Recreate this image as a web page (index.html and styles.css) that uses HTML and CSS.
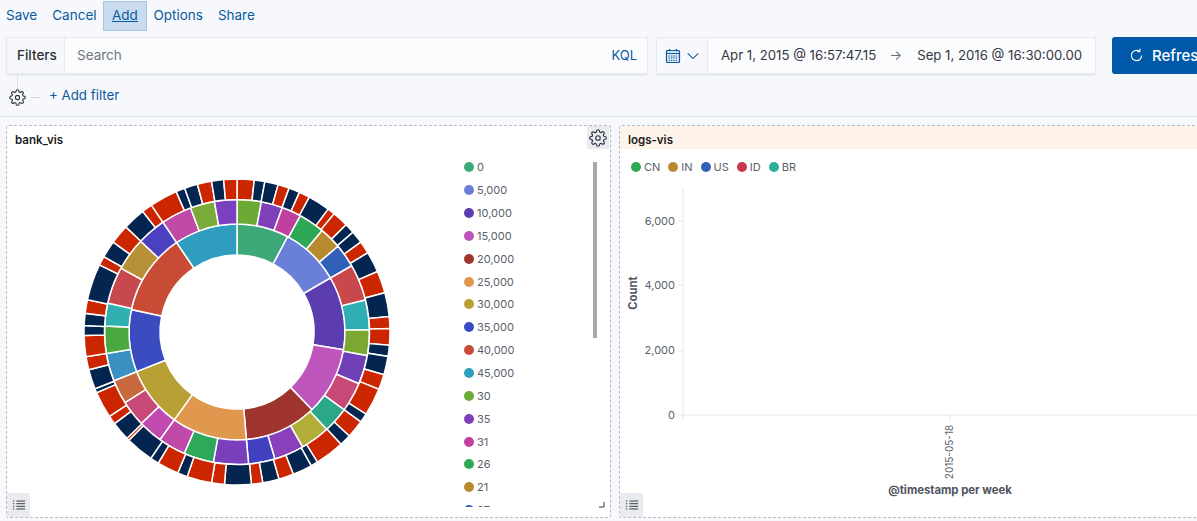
FILE: index.html
```html
<!DOCTYPE html>
<html lang="en">

<head>
  <meta charset="UTF-8">
  <title>Dashboard</title>
  <link rel="stylesheet" href="styles.css">
  <script src="donut.js" defer></script>
</head>

<body>
  <svg class="defs" width="0" height="0">
    <symbol id="gear" viewBox="0 0 24 24">
      <circle cx="12" cy="12" r="3"></circle>
      <path d="M19.4 15a1.65 1.65 0 0 0 .33 1.82l.06.06a2 2 0 0 1 0 2.83 2 2 0 0 1-2.83 0l-.06-.06a1.65 1.65 0 0 0-1.82-.33 1.65 1.65 0 0 0-1 1.51V21a2 2 0 0 1-2 2 2 2 0 0 1-2-2v-.09A1.65 1.65 0 0 0 9 19.4a1.65 1.65 0 0 0-1.82.33l-.06.06a2 2 0 0 1-2.83 0 2 2 0 0 1 0-2.83l.06-.06a1.65 1.65 0 0 0 .33-1.82 1.65 1.65 0 0 0-1.51-1H3a2 2 0 0 1-2-2 2 2 0 0 1 2-2h.09A1.65 1.65 0 0 0 4.6 9a1.65 1.65 0 0 0-.33-1.82l-.06-.06a2 2 0 0 1 0-2.83 2 2 0 0 1 2.83 0l.06.06a1.65 1.65 0 0 0 1.82.33H9a1.65 1.65 0 0 0 1-1.51V3a2 2 0 0 1 2-2 2 2 0 0 1 2 2v.09a1.65 1.65 0 0 0 1 1.51 1.65 1.65 0 0 0 1.82-.33l.06-.06a2 2 0 0 1 2.83 0 2 2 0 0 1 0 2.83l-.06.06a1.65 1.65 0 0 0-.33 1.82V9a1.65 1.65 0 0 0 1.51 1H21a2 2 0 0 1 2 2 2 2 0 0 1-2 2h-.09a1.65 1.65 0 0 0-1.51 1z"></path>
    </symbol>
    <symbol id="list" viewBox="0 0 16 16">
      <path d="M5 3.5h10M5 6.5h10M5 9.5h10M5 12.5h10"></path>
      <path class="dots" d="M1 3.5h1.6M1 6.5h1.6M1 9.5h1.6M1 12.5h1.6"></path>
    </symbol>
  </svg>

  <nav class="topnav">
    <a class="navlink" href="#">Save</a>
    <a class="navlink" href="#">Cancel</a>
    <a class="navlink active" href="#">Add</a>
    <a class="navlink" href="#">Options</a>
    <a class="navlink" href="#">Share</a>
  </nav>

  <div class="querybar">
    <div class="searchbox">
      <span class="prepend">Filters</span>
      <span class="search">Search</span>
      <a class="kql" href="#">KQL</a>
    </div>
    <div class="datebox">
      <span class="calbtn">
        <svg class="calicon" viewBox="0 0 16 16" width="16" height="16">
          <rect x="1.5" y="2.5" width="13" height="12" rx="1"></rect>
          <path d="M1.5 5.5h13M4.5 1v2.5M11.5 1v2.5"></path>
          <path class="calgrid" d="M3.5 8h9M3.5 10h9M3.5 12.4h9" stroke-dasharray="1.4 1"></path>
        </svg>
        <svg class="chevron" viewBox="0 0 16 16" width="14" height="14">
          <path d="M2 5l6 6 6-6"></path>
        </svg>
      </span>
      <span class="daterange">
        <span>Apr 1, 2015 @ 16:57:47.15</span>
        <span class="arrow">→</span>
        <span>Sep 1, 2016 @ 16:30:00.00</span>
      </span>
    </div>
    <button class="refresh">
      <svg class="refreshicon" viewBox="0 0 16 16" width="15" height="15">
        <path d="M13.5 8a5.5 5.5 0 1 1-2.2-4.4"></path>
        <path d="M11.6 0.8v3.1H8.6"></path>
      </svg>
      Refresh
    </button>
  </div>

  <div class="filterrow">
    <span class="gearwrap">
      <span class="stem"></span>
      <svg class="gearicon" width="17" height="17"><use href="#gear"></use></svg>
    </span>
    <span class="dash"></span>
    <a class="addfilter" href="#">+ Add filter</a>
  </div>

  <main class="panels">
    <section class="panel">
      <h2 class="paneltitle">bank_vis</h2>
      <button class="panelgear"><svg class="gearicon" width="17" height="17"><use href="#gear"></use></svg></button>
      <div class="panelbody">
        <svg id="donut" class="donut" viewBox="-155 -155 310 310" width="310" height="310"></svg>
        <ul class="legend">
          <li><i class="dot c0"></i>0</li>
          <li><i class="dot c1"></i>5,000</li>
          <li><i class="dot c2"></i>10,000</li>
          <li><i class="dot c3"></i>15,000</li>
          <li><i class="dot c4"></i>20,000</li>
          <li><i class="dot c5"></i>25,000</li>
          <li><i class="dot c6"></i>30,000</li>
          <li><i class="dot c7"></i>35,000</li>
          <li><i class="dot c8"></i>40,000</li>
          <li><i class="dot c9"></i>45,000</li>
          <li><i class="dot c10"></i>30</li>
          <li><i class="dot c11"></i>35</li>
          <li><i class="dot c12"></i>31</li>
          <li><i class="dot c13"></i>26</li>
          <li><i class="dot c14"></i>21</li>
          <li><i class="dot c15"></i>27</li>
        </ul>
        <span class="scrollbar"></span>
      </div>
      <button class="legendtoggle"><svg class="listicon" width="14" height="14"><use href="#list"></use></svg></button>
      <svg class="resize" width="6" height="6" viewBox="0 0 6 6"><path d="M5 0v5H0"></path></svg>
    </section>

    <section class="panel">
      <h2 class="paneltitle warn">logs-vis</h2>
      <ul class="hlegend">
        <li><i class="dot c13"></i>CN</li>
        <li><i class="dot c14"></i>IN</li>
        <li><i class="dot c15"></i>US</li>
        <li><i class="dot red"></i>ID</li>
        <li><i class="dot teal"></i>BR</li>
      </ul>
      <svg class="chart" width="578" height="340">
        <path class="axis" d="M63 11V245M58 239H578M58 175H63M58 109H63M58 45H63M330 239V245"></path>
        <text class="tick" x="55" y="49">6,000</text>
        <text class="tick" x="55" y="113">4,000</text>
        <text class="tick" x="55" y="178">2,000</text>
        <text class="tick" x="55" y="243">0</text>
        <text class="axistitle" transform="translate(17 117) rotate(-90)">Count</text>
        <text class="datetick" transform="translate(333 276) rotate(-90)">2015-05-18</text>
        <text class="axistitle" x="330" y="318">@timestamp per week</text>
      </svg>
      <button class="legendtoggle"><svg class="listicon" width="14" height="14"><use href="#list"></use></svg></button>
    </section>
  </main>
</body>

</html>
```

FILE: styles.css
```css
* {
  box-sizing: border-box;
}

html,
body {
  height: 100%;
  overflow: hidden;
}

body {
  margin: 0;
  background: #f6f8fc;
  color: #343741;
  font-family: Inter, "Liberation Sans", sans-serif;
  font-size: 14px;
}

a {
  color: #0b5a9e;
  text-decoration: none;
}

.defs {
  position: absolute;
}

.topnav {
  display: flex;
  align-items: center;
  height: 30px;
  padding-left: 6px;
}

.navlink {
  margin-right: 15px;
  font-size: 13.5px;
}

.navlink.active {
  margin: 1px 6px 0 -9px;
  padding: 0 8.5px;
  height: 30px;
  line-height: 26px;
  background: #c9dcef;
  border: 1px solid #a9c4e0;
  text-decoration: underline;
}

.querybar {
  display: flex;
  height: 37px;
  margin-top: 7px;
  padding-left: 6px;
  width: 1300px;
}

.searchbox,
.datebox {
  display: flex;
  align-items: center;
  background: #fbfcfe;
  border: 1px solid #e6e9f0;
  box-shadow: 0 2px 2px -1px rgba(90, 100, 120, 0.18);
}

.searchbox {
  width: 642px;
}

.prepend {
  display: flex;
  align-items: center;
  height: 100%;
  padding: 0 10px 2px;
  width: 58px;
  background: #f7f8fb;
  border-right: 1px solid #e6e9f0;
  font-weight: 500;
  font-size: 13.5px;
  color: #2b2f38;
}

.search {
  flex: 1;
  margin-bottom: 2px;
  padding-left: 12px;
  color: #6f7480;
  font-size: 13.5px;
}

.kql {
  margin: 0 10px 2px 0;
  font-size: 13px;
}

.datebox {
  width: 440px;
  margin-left: 8px;
}

.calbtn {
  display: flex;
  align-items: center;
  gap: 5px;
  height: 100%;
  width: 51px;
  padding-left: 8px;
  background: #f7f8fb;
  border-right: 1px solid #e6e9f0;
}

.calicon,
.chevron,
.refreshicon {
  fill: none;
  stroke: #0b5a9e;
  stroke-width: 1.2;
}

.calicon rect {
  fill: #dfeaf5;
}

.calgrid {
  stroke-width: 1;
}

.daterange {
  display: flex;
  align-items: center;
  margin-bottom: 2px;
  padding-left: 13px;
  font-size: 13.2px;
  color: #343741;
}

.arrow {
  width: 39px;
  margin-right: 2px;
  text-align: center;
  color: #69707d;
}

.refresh {
  display: flex;
  align-items: center;
  gap: 8px;
  width: 120px;
  margin-left: 16px;
  padding: 0 0 0 17px;
  background: #0059a8;
  border: 0;
  border-radius: 3px;
  color: #fff;
  font-family: inherit;
  font-size: 15px;
  font-weight: 500;
}

.refreshicon {
  stroke: #fff;
}

.filterrow {
  display: flex;
  align-items: flex-start;
  height: 43px;
  padding-left: 9px;
  border-bottom: 1px solid #dfe3ea;
}

.gearwrap {
  display: flex;
  flex-direction: column;
  align-items: center;
}

.stem {
  width: 1px;
  height: 15px;
  background: #dcdfe6;
}

.gearicon {
  fill: none;
  stroke: #343741;
  stroke-width: 1.6;
}

.dash {
  width: 9px;
  height: 1px;
  margin: 23px 9px 0 5px;
  background: #d3d6dd;
}

.addfilter {
  margin-top: 13px;
  font-size: 13.3px;
}

.panels {
  display: grid;
  grid-template-columns: 605px 600px;
  gap: 8px;
  margin-top: 8px;
  padding-left: 6px;
  height: 393px;
}

.panel {
  position: relative;
  background: #fff;
  border: 1px dashed #b4b9c6;
  border-radius: 3px;
  overflow: hidden;
}

.paneltitle {
  height: 23px;
  margin: 0;
  padding-left: 8px;
  font-size: 11.5px;
  font-weight: 600;
  line-height: 28px;
  color: #1a1c21;
}

.paneltitle.warn {
  background: #fdf3e8;
}

.panelgear {
  position: absolute;
  top: 0;
  right: 1px;
  width: 22px;
  height: 23px;
  padding: 3px 0 0;
  background: #e9ebf0;
  border: 0;
  border-radius: 0 0 0 3px;
}

.panelgear .gearicon {
  width: 18px;
  height: 18px;
}

.panelbody {
  display: flex;
  align-items: flex-start;
  height: 368px;
}

.donut {
  flex: none;
  margin: 28px 0 0 75px;
}

.legend {
  width: 130px;
  height: 351px;
  margin: 7px 0 0 72px;
  padding: 0;
  overflow: hidden;
  list-style: none;
  font-size: 11px;
  color: #5a5f6b;
}

.legend li {
  display: flex;
  align-items: center;
  height: 22.85px;
}

.dot {
  flex: none;
  width: 10px;
  height: 10px;
  margin-right: 3px;
  border-radius: 50%;
}

.scrollbar {
  position: absolute;
  top: 36px;
  left: 586px;
  width: 4px;
  height: 176px;
  background: #a9a9a9;
}

.c0 { background: #3fa878; }
.c1 { background: #6a80d8; }
.c2 { background: #5b3db0; }
.c3 { background: #bd55bd; }
.c4 { background: #a03530; }
.c5 { background: #e0984f; }
.c6 { background: #b8a035; }
.c7 { background: #3a4cc0; }
.c8 { background: #c84c35; }
.c9 { background: #2f9dbd; }
.c10 { background: #6aaa35; }
.c11 { background: #7e3fb8; }
.c12 { background: #c040a0; }
.c13 { background: #2ea855; }
.c14 { background: #b88a30; }
.c15 { background: #3060b8; }
.red { background: #c8384f; }
.teal { background: #2fae9c; }

.legendtoggle {
  position: absolute;
  left: 0;
  bottom: 0;
  width: 23px;
  height: 24px;
  padding: 3px 0 0;
  background: #e9ebf0;
  border: 0;
  border-radius: 0 3px 0 3px;
}

.listicon {
  fill: none;
  stroke: #343741;
  stroke-width: 1.1;
}

.resize {
  position: absolute;
  right: 5px;
  bottom: 9px;
  fill: none;
  stroke: #343741;
  stroke-width: 1;
}

.hlegend {
  display: flex;
  gap: 8px;
  height: 27px;
  margin: 0;
  padding: 11px 0 0 11px;
  list-style: none;
  font-size: 11px;
  color: #5a5f6b;
}

.hlegend li {
  display: flex;
  align-items: center;
  height: 14px;
}

.chart {
  display: block;
  font-family: Inter, "Liberation Sans", sans-serif;
}

.axis {
  fill: none;
  stroke: #e4e6ea;
  stroke-width: 1;
}

.tick {
  font-size: 11px;
  fill: #5a5f6b;
  text-anchor: end;
}

.datetick {
  font-size: 10px;
  fill: #5a5f6b;
  text-anchor: middle;
}

.axistitle {
  font-size: 11.3px;
  font-weight: 700;
  fill: #50545f;
  text-anchor: middle;
}
```

FILE: donut.js
```js
// rings of the sunburst: [end angle in degrees, colour], clockwise from the top
const navy = "#04254f";
const red = "#cc2600";

const inner = [
  [28, "#3fa878"], [60, "#6a80d8"], [99.5, "#5b3db0"], [136, "#bd55bd"], [175, "#a03530"],
  [215.5, "#e0984f"], [248.5, "#b8a035"], [282, "#3a4cc0"], [326, "#c84c35"], [360, "#2f9dbd"]
];

const middle = [
  [10.6, "#6aaa35"], [20, "#7e3fb8"], [28.6, "#c040a0"], [40, "#2ea855"], [49.7, "#b88a30"],
  [60, "#3060b8"], [76, "#c8484c"], [89, "#2faeb4"], [100.3, "#7aa832"], [113, "#7040b8"],
  [126, "#c84878"], [137.4, "#2ba888"], [150.3, "#b2ae3a"], [163.4, "#8a40bb"], [175, "#4040c0"],
  [190.3, "#7a40bb"], [203.5, "#2ea85a"], [215.6, "#c04aa8"], [226.3, "#c04ab0"], [237.8, "#c84878"],
  [248.4, "#c86a40"], [260.7, "#3a90c0"], [272.6, "#4aa840"], [282.6, "#30b0b0"], [298.8, "#c84850"],
  [313.3, "#b89038"], [326, "#4a40c0"], [339.5, "#c04aa8"], [350.2, "#7aaa38"], [360, "#7a40c0"]
];

const outer = [
  [6.5, red], [10.5, navy], [15.6, navy], [19.9, red], [24.1, navy], [28.2, red], [36.6, navy],
  [39.4, red], [45.5, red], [49.3, navy], [54, navy], [58.8, red], [66.7, navy], [75.1, red],
  [84.2, navy], [88.7, red], [95, red], [99.2, navy], [106.2, navy], [112, red], [122.5, red],
  [126, navy], [132.8, red], [137.2, navy], [148.3, red], [151, navy], [158.4, navy], [164.1, red],
  [170.3, navy], [174.6, red], [184.7, navy], [189.6, red], [199, red], [202.8, navy], [211, red],
  [214.3, navy], [225, navy], [226, red], [233.2, navy], [236.5, red], [246.6, red], [248.2, navy],
  [255.7, navy], [260.7, red], [268.7, red], [272.4, navy], [277, navy], [282.2, red], [296, navy],
  [299.5, red], [306, navy], [313.4, red], [322, navy], [326, red], [336.6, red], [340, navy],
  [345, navy], [350.4, red], [355, navy], [360, red]
];

function point(r, deg) {
  let a = deg * Math.PI / 180;
  return (r * Math.sin(a)).toFixed(2) + " " + (-r * Math.cos(a)).toFixed(2);
}

function drawRing(svg, slices, r0, r1) {
  let start = 0;
  for (let i = 0; i < slices.length; i++) {
    let end = slices[i][0];
    let big = end - start > 180 ? 1 : 0;
    let path = document.createElementNS("http://www.w3.org/2000/svg", "path");
    path.setAttribute("d",
      "M" + point(r0, start) +
      "A" + r0 + " " + r0 + " 0 " + big + " 1 " + point(r0, end) +
      "L" + point(r1, end) +
      "A" + r1 + " " + r1 + " 0 " + big + " 0 " + point(r1, start) + "Z");
    path.setAttribute("fill", slices[i][1]);
    path.setAttribute("stroke", "#fff");
    path.setAttribute("stroke-width", "1.5");
    svg.appendChild(path);
    start = end;
  }
}

let donut = document.getElementById("donut");
drawRing(donut, inner, 77, 108);
drawRing(donut, middle, 108, 132.5);
drawRing(donut, outer, 132.5, 153);
```
